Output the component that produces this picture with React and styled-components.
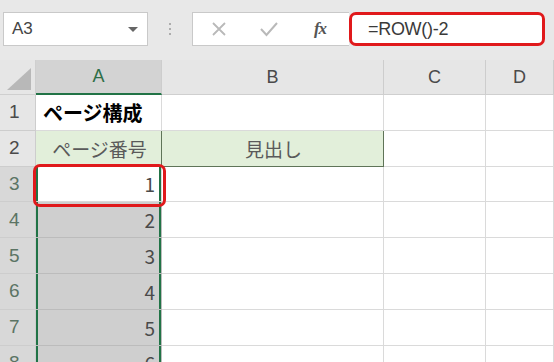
import React from 'react';
import styled, { createGlobalStyle } from 'styled-components';

const GlobalStyle = createGlobalStyle`
  html, body {
    margin: 0;
    padding: 0;
    background: #ffffff;
    overflow: hidden;
  }
  body {
    font-family: 'Noto Sans CJK JP', 'Noto Sans', sans-serif;
  }
`;

const Page = styled.div`
  width: 554px;
  height: 362px;
  overflow: hidden;
  background: #ffffff;
`;

const Toolbar = styled.div`
  height: 60px;
  box-sizing: border-box;
  padding: 12px 0 0 3px;
  background: #e8e8e8;
  display: flex;
  align-items: flex-start;
`;

const NameBox = styled.div`
  width: 145px;
  height: 34px;
  box-sizing: border-box;
  background: #fff;
  border: 1px solid #c9c9c9;
  display: flex;
  align-items: center;
  justify-content: space-between;
  padding: 0 9px 0 8px;
  font-family: 'Liberation Sans', sans-serif;
  font-size: 17px;
  color: #444;
`;

const DropArrow = styled.span`
  width: 0;
  height: 0;
  border-left: 5px solid transparent;
  border-right: 5px solid transparent;
  border-top: 5px solid #666;
`;

const Grip = styled.div`
  width: 44px;
  height: 34px;
  display: flex;
  flex-direction: column;
  align-items: center;
  justify-content: center;
  gap: 3px;
  & > span {
    width: 2px;
    height: 2px;
    border-radius: 1px;
    background: #9a9a9a;
  }
`;

const ButtonBox = styled.div`
  width: 157px;
  height: 34px;
  box-sizing: border-box;
  background: #fff;
  border: 1px solid #c9c9c9;
  border-right: none;
  display: flex;
  align-items: center;
`;

const IconSlot = styled.div`
  width: ${({ $w }) => $w}px;
  display: flex;
  justify-content: center;
  align-items: center;
`;

const Fx = styled.span`
  font-family: 'Liberation Serif', serif;
  font-style: italic;
  font-weight: bold;
  font-size: 17px;
  color: #555;
  letter-spacing: -1px;
`;

const FormulaBox = styled.div`
  width: 196px;
  height: 34px;
  box-sizing: border-box;
  background: #fff;
  border: 3px solid #e0191b;
  border-radius: 7px;
  display: flex;
  align-items: center;
  padding-left: 16px;
  font-family: 'Liberation Sans', sans-serif;
  font-size: 18px;
  color: #3a3a3a;
  letter-spacing: -0.3px;
`;

const Sheet = styled.div`
  position: relative;
  display: grid;
  grid-template-columns: 36px 126px 222px 102px 1fr;
  grid-template-rows: 35px repeat(8, 35.8px);
`;

const Corner = styled.div`
  background: #e6e6e6;
  border-right: 1px solid #cfcfcf;
  border-bottom: 1px solid #cfcfcf;
  box-sizing: border-box;
  display: flex;
  align-items: flex-end;
  justify-content: flex-end;
  padding: 0 4px 4px 0;
`;

const ColHeader = styled.div`
  box-sizing: border-box;
  background: ${({ $sel }) => ($sel ? '#d3d3d3' : '#e6e6e6')};
  border-right: 1px solid #cdcdcd;
  border-bottom: ${({ $sel }) => ($sel ? '2px solid #217346' : '1px solid #cfcfcf')};
  display: flex;
  align-items: center;
  justify-content: center;
  font-family: 'Liberation Sans', sans-serif;
  font-size: 18px;
  color: ${({ $sel }) => ($sel ? '#2f6e47' : '#4a4a4a')};
`;

const RowHeader = styled.div`
  box-sizing: border-box;
  background: ${({ $sel }) => ($sel ? '#d8d8d8' : '#e6e6e6')};
  border-right: 1px solid #cdcdcd;
  border-bottom: 1px solid #cdcdcd;
  display: flex;
  align-items: center;
  padding-left: 9px;
  font-family: 'Liberation Sans', sans-serif;
  font-size: 19px;
  color: ${({ $sel }) => ($sel ? '#5b7464' : '#4a4a4a')};
`;

const Cell = styled.div`
  box-sizing: border-box;
  background: ${({ $fill }) => $fill || '#fff'};
  border-right: 1px solid ${({ $line }) => $line || '#dadada'};
  border-bottom: 1px solid ${({ $line }) => $line || '#dadada'};
  display: flex;
  align-items: center;
  justify-content: ${({ $align }) => $align || 'flex-start'};
  padding: 0 5px 0 7px;
  font-size: ${({ $bold }) => ($bold ? 20 : 19)}px;
  font-weight: ${({ $bold }) => ($bold ? 700 : 400)};
  color: ${({ $color }) => $color || '#333'};
  white-space: nowrap;
  overflow: hidden;
  box-shadow: ${({ $sel }) => ($sel ? 'inset 2px 0 0 #217346, inset -2px 0 0 #217346' : 'none')};
`;

const Num = styled.span`
  font-family: 'Noto Sans CJK JP', sans-serif;
  font-size: 19px;
  color: #4a4a4a;
  padding-right: 1px;
`;

const Highlight = styled.div`
  position: absolute;
  left: 33px;
  top: 104px;
  width: 133px;
  height: 43px;
  box-sizing: border-box;
  border: 3px solid #e0191b;
  border-radius: 7px;
  pointer-events: none;
`;

const CrossIcon = () => (
  <svg width="16" height="16" viewBox="0 0 16 16">
    <path d="M2 2 L14 14 M14 2 L2 14" stroke="#b9b9b9" strokeWidth="1.8" fill="none" />
  </svg>
);

const CheckIcon = () => (
  <svg width="20" height="16" viewBox="0 0 20 16">
    <path d="M2 8 L7.5 14 L18 2" stroke="#b9b9b9" strokeWidth="2" fill="none" />
  </svg>
);

const CornerTriangle = () => (
  <svg width="24" height="22" viewBox="0 0 24 22">
    <polygon points="24,0 24,22 0,22" fill="#b8b8b8" />
  </svg>
);

const rows = [3, 4, 5, 6, 7, 8];

const App = () => (
  <Page>
    <GlobalStyle />
    <Toolbar>
      <NameBox>
        A3
        <DropArrow />
      </NameBox>
      <Grip>
        <span />
        <span />
        <span />
      </Grip>
      <ButtonBox>
        <IconSlot $w={52}>
          <CrossIcon />
        </IconSlot>
        <IconSlot $w={48}>
          <CheckIcon />
        </IconSlot>
        <IconSlot $w={54}>
          <Fx>fx</Fx>
        </IconSlot>
      </ButtonBox>
      <FormulaBox>=ROW()-2</FormulaBox>
    </Toolbar>
    <Sheet>
      <Corner>
        <CornerTriangle />
      </Corner>
      <ColHeader $sel>A</ColHeader>
      <ColHeader>B</ColHeader>
      <ColHeader>C</ColHeader>
      <ColHeader>D</ColHeader>

      <RowHeader>1</RowHeader>
      <Cell $bold $color="#000">ページ構成</Cell>
      <Cell />
      <Cell />
      <Cell />

      <RowHeader>2</RowHeader>
      <Cell $fill="#e2efda" $line="#5f7458" $align="center" $color="#5a5a5a">
        ページ番号
      </Cell>
      <Cell $fill="#e2efda" $line="#5f7458" $align="center" $color="#5a5a5a">
        見出し
      </Cell>
      <Cell />
      <Cell />

      {rows.map((r, i) => (
        <React.Fragment key={r}>
          <RowHeader $sel>{r}</RowHeader>
          <Cell
            $sel
            $align="flex-end"
            $fill={i === 0 ? '#fff' : '#cfcfcf'}
            $line={i === 0 ? '#dadada' : '#bcbcbc'}
          >
            <Num>{i + 1}</Num>
          </Cell>
          <Cell />
          <Cell />
          <Cell />
        </React.Fragment>
      ))}
      <Highlight />
    </Sheet>
  </Page>
);

export default App;
